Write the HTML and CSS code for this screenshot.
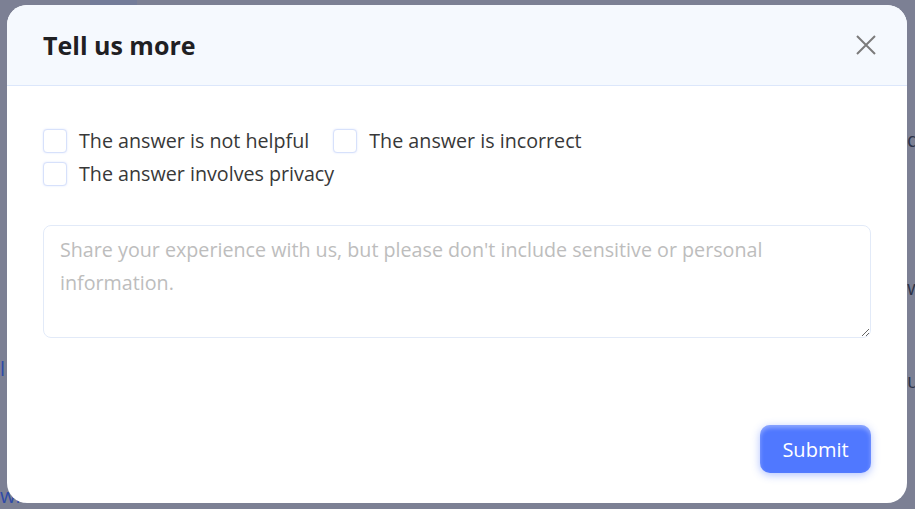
FILE: index.html
```html
<!DOCTYPE html>
<html>
<head>
<meta charset="utf-8">
<link rel="stylesheet" href="styles.css">
</head>
<body>
<div class="backdrop">
  <div class="bg-left">
    <div class="bg-cell"></div>
    <div class="bg-link">l</div>
    <div class="bg-link bottom">whic...</div>
  </div>
  <div class="bg-right">
    <div class="bg-text t1">d</div>
    <div class="bg-text t2">w</div>
    <div class="bg-text t3">u</div>
  </div>
</div>
<div class="overlay">
  <div class="modal">
    <div class="modal-header">
      <h2 class="modal-title">Tell us more</h2>
      <button class="close-btn" aria-label="Close">
        <svg width="20" height="20" viewBox="0 0 20 20"><path d="M1 1 L19 19 M19 1 L1 19" stroke="#7b7b7b" stroke-width="2" fill="none"/></svg>
      </button>
    </div>
    <div class="modal-body">
      <div class="options">
        <label class="option"><span class="box"></span>The answer is not helpful</label>
        <label class="option"><span class="box"></span>The answer is incorrect</label>
        <label class="option"><span class="box"></span>The answer involves privacy</label>
      </div>
      <textarea class="feedback" placeholder="Share your experience with us, but please don't include sensitive or personal information."></textarea>
      <div class="actions">
        <button class="submit">Submit</button>
      </div>
    </div>
  </div>
</div>
</body>
</html>
```
FILE: styles.css
```css
html, body {
  margin: 0;
  padding: 0;
  width: 915px;
  height: 509px;
  overflow: hidden;
}
body {
  background: #7c8094;
  font-family: "Open Sans", "Noto Sans", sans-serif;
  position: relative;
}
.backdrop {
  display: flex;
  justify-content: space-between;
  height: 509px;
}
.bg-left {
  width: 60px;
  display: flex;
  flex-direction: column;
}
.bg-cell {
  height: 5px;
  margin-left: 90px;
  width: 47px;
  background: #737c99;
}
.bg-link {
  color: #2e4aa8;
  font-size: 20px;
  margin-top: 350px;
}
.bg-link.bottom {
  margin-top: 100px;
}
.bg-right {
  width: 8px;
  display: flex;
  flex-direction: column;
}
.bg-text {
  color: #2d3349;
  font-size: 20px;
  line-height: 24px;
}
.t1 { margin-top: 128px; }
.t2 { margin-top: 124px; }
.t3 { margin-top: 69px; }

.overlay {
  position: absolute;
  inset: 0;
  padding: 5px 8px 6px 7px;
}
.modal {
  width: 900px;
  height: 498px;
  background: #ffffff;
  border-radius: 20px;
  overflow: hidden;
  display: flex;
  flex-direction: column;
}
.modal-header {
  height: 81px;
  box-sizing: border-box;
  background: #f5f9fe;
  border-bottom: 1px solid #dce7fb;
  display: flex;
  align-items: center;
  justify-content: space-between;
  padding: 0 31px 0 36px;
}
.modal-title {
  margin: 0;
  font-size: 25px;
  font-weight: 700;
  color: #1f2023;
}
.close-btn {
  border: 0;
  background: transparent;
  padding: 0;
  width: 20px;
  height: 20px;
  cursor: pointer;
}
.modal-body {
  flex: 1;
  padding: 38px 36px 30px 36px;
  display: flex;
  flex-direction: column;
}
.options {
  display: flex;
  flex-wrap: wrap;
  column-gap: 24px;
  row-gap: 0;
  width: 700px;
}
.option {
  display: flex;
  align-items: center;
  gap: 12px;
  font-size: 19.7px;
  line-height: 33px;
  color: #383838;
}
.box {
  width: 22px;
  height: 22px;
  border: 1px solid #d7e1fb;
  border-radius: 4px;
  box-shadow: 0 0 2px rgba(120, 150, 255, 0.25);
  background: #fff;
}
.feedback {
  margin-top: 35px;
  height: 113px;
  box-sizing: border-box;
  width: 100%;
  border: 1px solid #e2eaf8;
  border-radius: 8px;
  padding: 7px 16px;
  font-family: inherit;
  font-size: 19.7px;
  line-height: 33px;
  color: #333;
  resize: vertical;
  outline: none;
}
.feedback::placeholder {
  color: #bdbdbd;
}
.actions {
  margin-top: auto;
  display: flex;
  justify-content: flex-end;
}
.submit {
  width: 111px;
  height: 48px;
  border: 0;
  border-radius: 10px;
  background: #5078ff;
  color: #fff;
  font-family: inherit;
  font-size: 20px;
  box-shadow: 0 2px 8px rgba(80, 120, 255, 0.45), inset 0 3px 4px rgba(255, 255, 255, 0.35);
  cursor: pointer;
}
```
